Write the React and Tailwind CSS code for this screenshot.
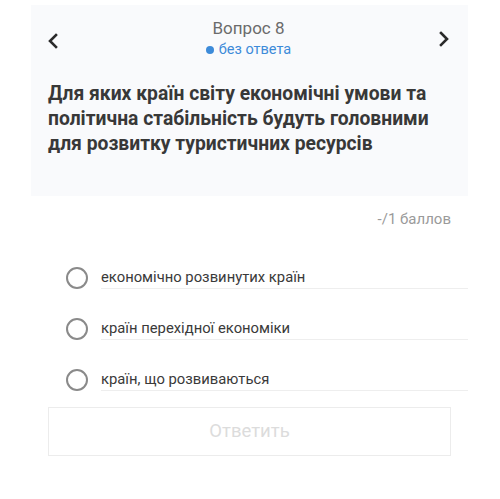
import React, { useState } from 'react';

const options = [
  'економічно розвинутих країн',
  'країн перехідної економіки',
  'країн, що розвиваються',
];

const Chevron = ({ dir }) => (
  <svg width="14" height="16" viewBox="0 0 14 16" fill="none">
    <path
      d={dir === 'left' ? 'M10 2 L4 8 L10 14' : 'M4 2 L10 8 L4 14'}
      stroke="#2a2a2a"
      strokeWidth="2.6"
      strokeLinecap="square"
    />
  </svg>
);

const App = () => {
  const [picked, setPicked] = useState(null);

  return (
    <div className="w-[500px] h-[499px] bg-white pt-[5px] font-['Roboto',sans-serif] overflow-hidden">
      <div className="mx-[31px] w-[437px] h-[191px] bg-[#f9fafc] pt-[13px]">
        <div className="flex items-start justify-between pl-[15px] pr-[17px]">
          <button className="mt-[15px] w-[14px]">
            <Chevron dir="left" />
          </button>
          <div className="flex flex-col items-center">
            <div className="text-[17px] leading-[20px] text-[#6b6b6b]">Вопрос 8</div>
            <div className="flex items-center gap-[5px] mt-[3px] text-[14.5px] leading-[18px] text-[#3d8bd9]">
              <span className="w-[8px] h-[8px] rounded-full bg-[#3d8bd9]"></span>
              без ответа
            </div>
          </div>
          <button className="mt-[13px] w-[14px]">
            <Chevron dir="right" />
          </button>
        </div>
        <p className="mt-[22px] pl-[17px] pr-[10px] text-[19.3px] leading-[25px] font-bold text-[#383838]">
          Для яких країн світу економічні умови та політична стабільність будуть головними для розвитку туристичних ресурсів
        </p>
      </div>

      <div className="flex justify-end pr-[47px] mt-[13px]">
        <span className="text-[15px] leading-[20px] text-[#9a9a9a] px-[2px]">-/1 баллов</span>
      </div>

      <div className="mt-[23px] ml-[66px] w-[402px]">
        {options.map((opt, i) => (
          <label key={i} className="flex items-center h-[51px] cursor-pointer" onClick={() => setPicked(i)}>
            <span className="w-[22px] h-[22px] rounded-full border-2 border-[#8a8a8a] flex items-center justify-center shrink-0">
              {picked === i && <span className="w-[10px] h-[10px] rounded-full bg-[#3d8bd9]"></span>}
            </span>
            <span className="ml-[13px] flex-1 h-[22px] border-b border-[#eeeeee] text-[14.8px] leading-[20px] text-[#3a3a3a]">
              {opt}
            </span>
          </label>
        ))}
      </div>

      <button className="mt-[2px] ml-[48px] w-[403px] h-[49px] border border-[#ececec] text-[18.5px] text-[#dcdcdc] bg-white">
        Ответить
      </button>
    </div>
  );
};

export default App;
